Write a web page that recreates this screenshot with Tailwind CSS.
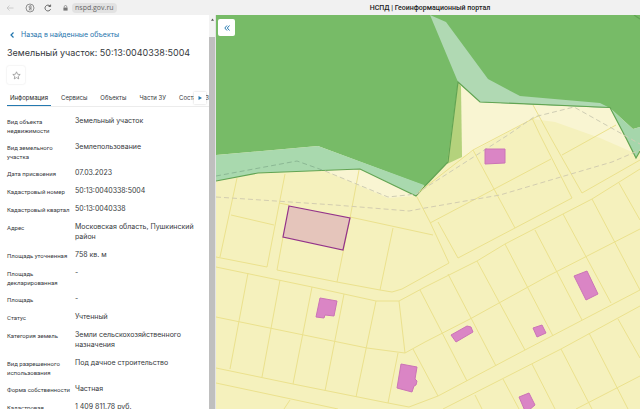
<!DOCTYPE html>
<html lang="ru">
  <head>
    <meta charset="UTF-8" />
    <meta name="viewport" content="width=device-width, initial-scale=1" />
    <title>НСПД | Геоинформационный портал</title>
    <script src="https://cdn.jsdelivr.net/npm/@tailwindcss/browser@4"></script>
  </head>
  <body
    class="h-screen flex flex-col overflow-hidden bg-white text-[#36393d] font-['Inter','Liberation_Sans',sans-serif]"
  >
    <!-- Browser bar -->
    <header class="h-[15px] shrink-0 flex items-center bg-[#f1f1f1]">
      <nav class="w-[216px] shrink-0 flex items-center pl-[6px]">
        <button type="button" aria-label="Назад" class="w-[19px] text-[#c4c4c4]">
          <svg viewBox="0 0 8 8" class="size-2" fill="none" stroke="currentColor" stroke-width="0.8">
            <path d="M7.500 4H1M3.500 1.500L1 4l2.500 2.500" />
          </svg>
        </button>
        <button type="button" aria-label="Яндекс" class="w-[19px] text-[#666]">
          <svg viewBox="0 0 10 10" class="size-[10px]" fill="none" stroke="currentColor" stroke-width="0.7">
            <circle cx="5" cy="5" r="4" />
            <path d="M6 7.500V2.700H5.200C3.600 2.700 3.600 5.100 5.200 5.100H6M5.100 5.100L4 7.500" />
          </svg>
        </button>
        <button type="button" aria-label="Обновить" class="w-[17px] text-[#555]">
          <svg viewBox="0 0 8 8" class="size-2" fill="none" stroke="currentColor" stroke-width="0.9">
            <path d="M6.600 5.200A2.900 2.900 0 1 1 6 2M6.600 0.600V2.500H4.600" />
          </svg>
        </button>
        <div class="flex items-center gap-1 h-[10px] px-[2px] text-[#777]">
          <svg viewBox="0 0 6 7" class="w-[5px] h-[6px]" fill="currentColor">
            <path d="M0.500 3h5v3.600h-5z" />
            <path d="M1.500 3V2a1.500 1.500 0 0 1 3 0v1" fill="none" stroke="currentColor" stroke-width="0.8" />
          </svg>
          <span class="px-[3px] rounded-sm bg-[#e2e2e2] text-[7px] leading-[10px] text-[#666] font-['Open_Sans',sans-serif]">nspd.gov.ru</span>
        </div>
      </nav>
      <p class="flex-1 pl-1 text-center text-[7px] leading-[10px] font-medium text-[#222] font-['Roboto',sans-serif]">
        НСПД | Геоинформационный портал
      </p>
    </header>

    <div class="flex-1 min-h-0 flex">
      <!-- Object card -->
      <aside class="w-[216px] shrink-0 flex overflow-hidden">
        <div class="flex-1 min-w-0 pl-[7px] pt-[15px]">
          <a href="#" class="flex items-center gap-[6px] pl-[3px] text-[7px] leading-[10px] text-[#1f74ad]">
            <svg viewBox="0 0 5 6" class="w-[5px] h-[6px]" fill="none" stroke="currentColor" stroke-width="1.200">
              <path d="M3.500 0.500L1 3l2.500 2.500" />
            </svg>
            Назад в найденные объекты
          </a>
          <h1 class="mt-[7px] text-[9px] leading-3 whitespace-nowrap">
            Земельный участок: 50:13:0040338:5004
          </h1>
          <button
            type="button"
            aria-label="В избранное"
            class="mt-[7px] size-[18px] flex items-center justify-center rounded-xs bg-white text-[#8a8a8a] shadow-[0_0_2px_#0002]"
          >
            <svg viewBox="0 0 10 10" class="size-[9px]" fill="none" stroke="currentColor" stroke-width="0.8">
              <path d="M5 0.900l1.200 2.700 2.900.3-2.200 2 .6 2.900L5 7.300 2.500 8.800l.6-2.900-2.200-2 2.900-.3z" />
            </svg>
          </button>
          <div class="relative mt-[6px] border-b border-[#ececec]">
            <div role="tablist" class="flex overflow-hidden text-[6px] leading-[10px] whitespace-nowrap">
              <button type="button" role="tab" aria-selected="true" class="h-4 w-[44px] shrink-0 border-b border-[#2479b0] text-[#222]">Информация</button>
              <button type="button" role="tab" class="h-4 pl-[10px] shrink-0">Сервисы</button>
              <button type="button" role="tab" class="h-4 pl-[13px] shrink-0">Объекты</button>
              <button type="button" role="tab" class="h-4 pl-[13px] shrink-0">Части ЗУ</button>
              <button type="button" role="tab" class="h-4 pl-[13px] shrink-0">Состав ЕЗП</button>
            </div>
            <button
              type="button"
              aria-label="Следующие вкладки"
              class="absolute right-[3px] top-[2px] size-3 flex items-center justify-center bg-white text-[#2479b0] shadow-[0_0_2px_#0003]"
            >
              <svg viewBox="0 0 4 4" class="size-1" fill="currentColor"><path d="M0.500 0L4 2 0.500 4z" /></svg>
            </button>
          </div>

          <table class="mt-[9px] w-full table-fixed text-left text-[7px] leading-[10px] [&_td]:pb-2 [&_td]:align-top [&_td]:pr-3 [&_th]:w-[68px] [&_th]:pt-px [&_th]:align-top [&_th]:pb-[7px] [&_th]:text-[6px] [&_th]:leading-[9px] [&_th]:font-normal [&_th]:font-['Roboto',sans-serif]">
            <tbody>
              <tr><th scope="row">Вид объекта<br />недвижимости</th><td>Земельный участок</td></tr>
              <tr><th scope="row">Вид земельного<br />участка</th><td>Землепользование</td></tr>
              <tr><th scope="row">Дата присвоения</th><td>07.03.2023</td></tr>
              <tr><th scope="row">Кадастровый номер</th><td>50:13:0040338:5004</td></tr>
              <tr><th scope="row">Кадастровый квартал</th><td>50:13:0040338</td></tr>
              <tr><th scope="row">Адрес</th><td>Московская область, Пушкинский район</td></tr>
              <tr><th scope="row">Площадь уточненная</th><td>758 кв. м</td></tr>
              <tr><th scope="row">Площадь<br />декларированная</th><td>-</td></tr>
              <tr><th scope="row">Площадь</th><td>-</td></tr>
              <tr><th scope="row">Статус</th><td>Учтенный</td></tr>
              <tr><th scope="row">Категория земель</th><td>Земли сельскохозяйственного назначения</td></tr>
              <tr><th scope="row">Вид разрешенного<br />использования</th><td>Под дачное строительство</td></tr>
              <tr><th scope="row">Форма собственности</th><td>Частная</td></tr>
              <tr><th scope="row">Кадастровая</th><td>1 409 811,78 руб.</td></tr>
            </tbody>
          </table>
        </div>
        <!-- Scrollbar -->
        <div class="w-[7px] shrink-0 flex flex-col items-center border-r border-[#e4e4e4] bg-[#f3f3f3]">
          <svg viewBox="0 0 4 3" class="mt-[3px] w-[3px] h-[3px]" fill="#555"><path d="M0 3L2 0l2 3z" /></svg>
          <div class="mt-4 w-full flex-1 bg-[#bfbfbf]"></div>
        </div>
      </aside>

      <!-- Map -->
      <main class="relative flex-1 min-w-0 overflow-hidden bg-[#f5f1bd]">
        <svg viewBox="216 15 424 394" preserveAspectRatio="xMinYMin slice" class="block w-full h-full" role="img" aria-label="Карта участков">
          <rect x="216" y="15" width="424" height="394" fill="#f5f1bd" />
          <!-- lighter ground along the forest -->
          <path fill="#f9f5d2" d="M458 82L480 102 610 107 632 152 600 138 555 122 533 119 462 157zM325 171L360 169 416 196 388 198z" />
          <!-- forest -->
          <path fill="#77bb67" d="M216 15H640V127L633 129 610 108 480 102 458 82 448 162 425 186 318 146 216 155z" />
          <path fill="#b4d27c" d="M458 82L461 86 462 157 447 164z" />
          <path fill="#b0d9b3" d="M430 15L446 22 488 79 520 96 600 103 610 108 480 102 458 82z" />
          <path fill="#a9d9ae" d="M216 155L318 146 424 185 416 196 360 169 258 173 216 181z" />
          <path fill="#a5d6ab" d="M610 108L633 129 640 127V150L636 158 627 140z" />
          <path fill="none" stroke="#62a453" stroke-width="1.2" d="M216 181L258 173 360 169 416 196 425 186 448 162 458 82 480 102 610 107.500 627 140 636 158 640 151M634 15L640 19" />

          <!-- parcel borders -->
          <g fill="none" stroke="#ebe18d" stroke-width="1">
            <path d="M237 178L220 257M231 215L274 225M285 174L267 267M216 257L267 267M279 203L289 205M283 237L277 270M359 170L350 218 337 282M350 217L433 235M393 228L380 290M417 197L430 222 449 263" />
            <path d="M277 270L337 282 380 290 392 292 402 289 449 263" />
            <path d="M216 267L312 287 376 301H399L425 287 477 261 505 244 563 214 592 199 640 169" />
            <path d="M438 222L458 258 515 228 572 198 540 135 532 118M430 223L483 195 551 159M473 150L515 228M533 105L552 140 582 193 640 160M562 155L616 125M419 192L473 150 540 115" />
            <path d="M619 183L640 220M592 199L640 290M563 214L611 303M535 230L582 320M505 244L553 336M477 261L525 350M448 274L496 366M420 290L467 381M413 349L438 396" />
            <path d="M640 229L548 276 499 303 470 319 425 342 405 353 367 348 216 317" />
            <path d="M248 273L230 369M280 280L262 377M312 287L293 384M344 294L325 391M376 301L356 397M399 301L405 353M398 353L388 403" />
            <path d="M216 368L293 384 388 403 409 407 438 396 525 350 640 290M216 383L338 409M290 400L284 409" />
            <path d="M640 306L561 349 443 409M475 395L482 409M503 379L519 409M532 364L555 409M561 349L592 409M589 333L628 409M618 319L640 358M576 409L640 376" />
          </g>

          <!-- protection zone limits -->
          <g fill="none" stroke-width="1" stroke-dasharray="5 3">
            <path stroke="#8bb894" d="M216 176L297 161 325 171" />
            <path stroke="#cfcdb4" d="M325 171L388 197 417 194 425 188 508 135 534 117 574 107 640 144" />
            <path stroke="#d3cdb0" d="M216 197L335 205 409 211 425 208 500 195 571 174 612 162 640 150" />
          </g>

          <!-- buildings -->
          <g fill="#da85c5" stroke="#cb74b6" stroke-width="1">
            <path d="M485 149H505V163L485 164z" />
            <path d="M320 298L337 301 334 316 325 315 324 318 316 317z" />
            <path d="M401 364L417 367 415 379 417 381 416 385 414 386 412 392 397 388z" />
            <path d="M451 335L467 326 471 327 473 332 456 342z" />
            <path d="M533 328L542 325 546 333 537 337z" />
            <path d="M574 276L587 271 598 294 586 300z" />
            <path d="M519 397L529 393 535 405 528 411H525z" />
          </g>

          <!-- selected parcel -->
          <path fill="#e5c5bb" stroke="#93338a" stroke-width="1.2" d="M289 206L350 218 343 250 283 237z" />
        </svg>
        <button
          type="button"
          aria-label="Свернуть панель"
          class="absolute left-[2px] top-1 size-[17px] flex items-center justify-center rounded-xs bg-white text-[#2479b0]"
        >
          <svg viewBox="0 0 6 6" class="size-[6px]" fill="none" stroke="currentColor" stroke-width="1">
            <path d="M3 0.500L0.800 3 3 5.500M5.500 0.500L3.300 3l2.200 2.500" />
          </svg>
        </button>
      </main>
    </div>
  </body>
</html>
